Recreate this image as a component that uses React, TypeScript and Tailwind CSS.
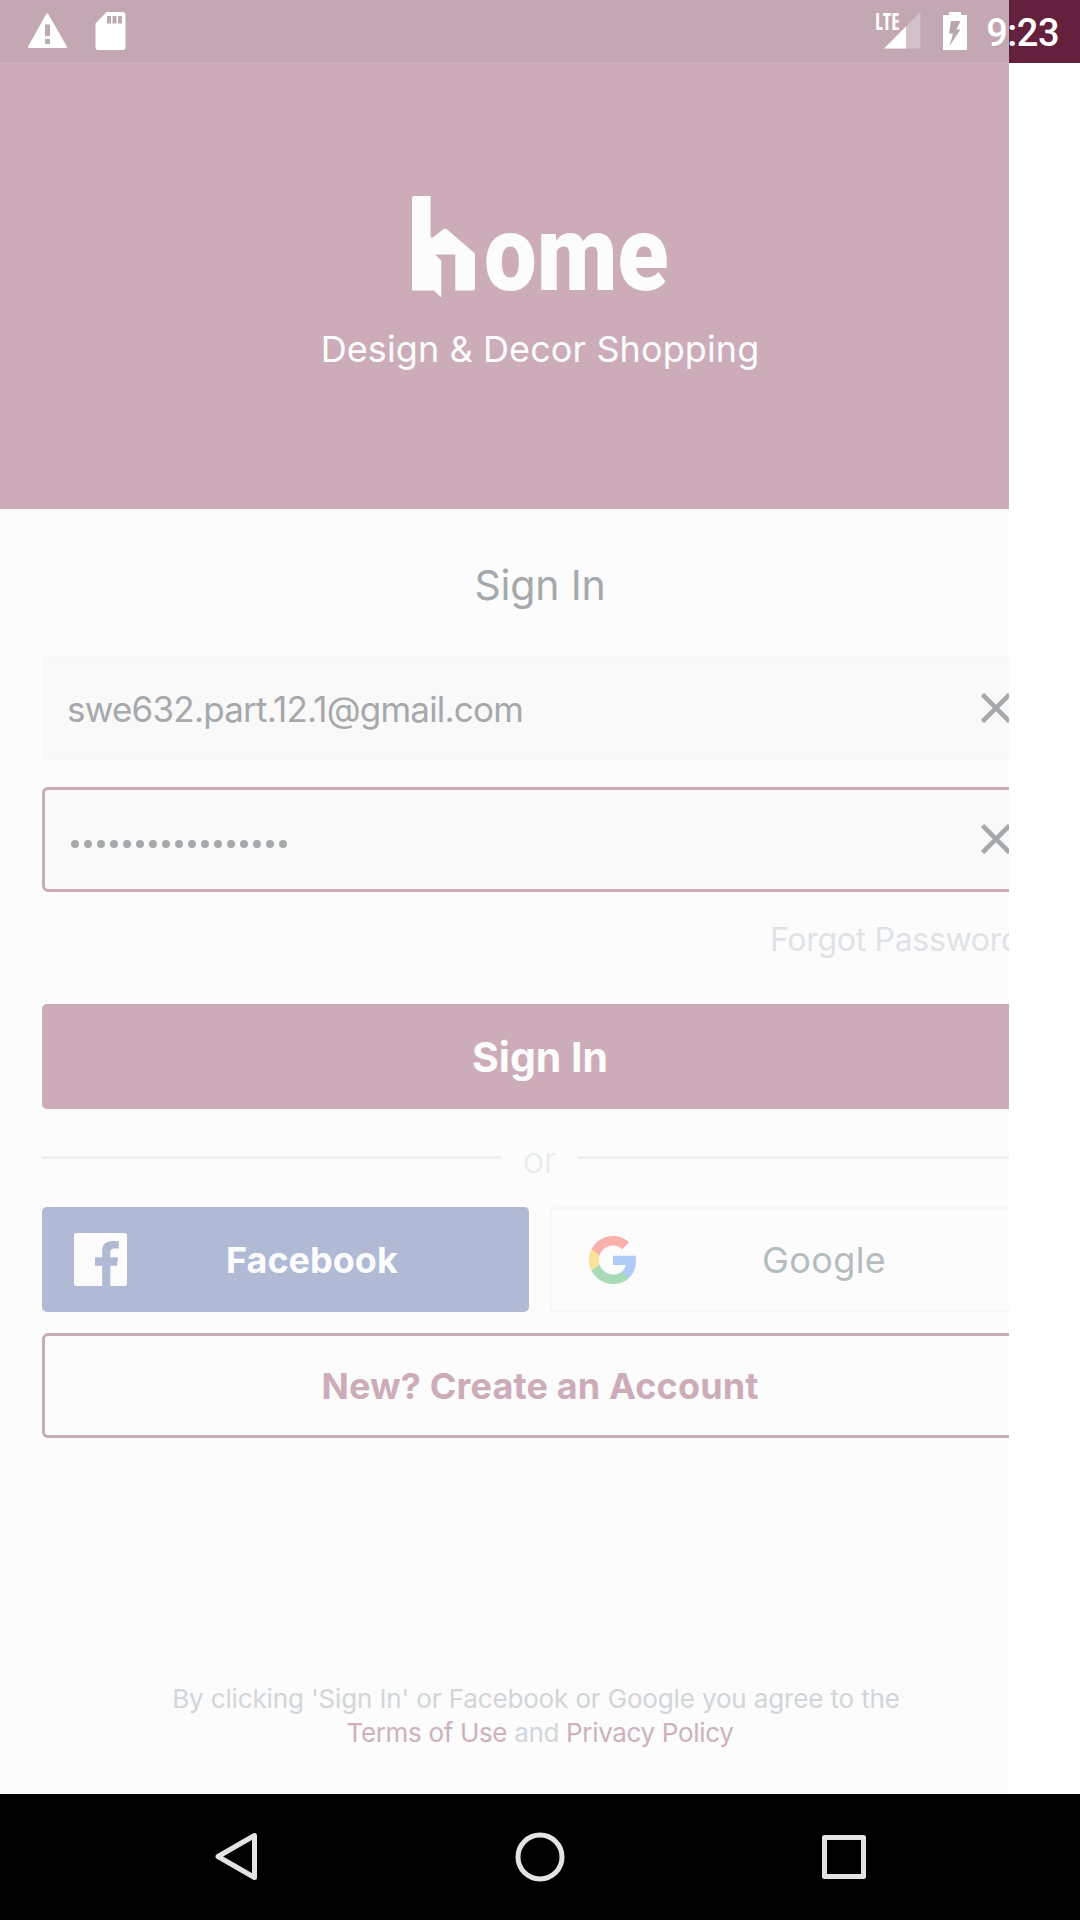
import React from "react";

function WarningIcon() {
  return (
    <svg className="ml-[27px] h-[36px] w-[41px]" viewBox="0 0 41 36">
      <path d="M20.2 2.200 39 35H2Z" fill="#fff" stroke="#fff" strokeWidth="2" strokeLinejoin="round" />
      <path d="M18 12.500h5v11.500h-5zM18 27h5v5h-5z" fill="#bcaab1" />
    </svg>
  );
}

function SdCardIcon() {
  return (
    <svg className="ml-[27px] h-[38px] w-[31px]" viewBox="0 0 31 38">
      <path d="M11.500 0H27.500a3 3 0 0 1 3 3V35a3 3 0 0 1-3 3H3.500a3 3 0 0 1-3-3V11.500Z" fill="#fff" />
      <path d="M12 4h4v7.500h-4zM17.500 4h4v7.500h-4zM23 4h4v7.500h-4z" fill="#bcaab1" />
    </svg>
  );
}

function SignalIcon() {
  return (
    <svg className="h-[37px] w-[37px]" viewBox="0 0 37 37">
      <path d="M36.500 0V36.500H0Z" fill="#d3c1ca" />
      <path d="M22 14.500V36.500H0Z" fill="#fff" />
    </svg>
  );
}

function BatteryIcon() {
  return (
    <svg className="ml-[22px] h-[38px] w-[24px]" viewBox="0 0 24 38">
      <path d="M6 0H18V3H24V38H0V3H6Z" fill="#fff" />
      <path d="M8 9H17.500L13.500 17.500H17.500L6.500 34L10 21.500H6Z" fill="#b9a5ae" />
    </svg>
  );
}

function StatusBar() {
  return (
    <header className="flex h-[63px] shrink-0 items-start bg-linear-to-r from-[#c3a7b2] from-[1009px] to-[#64203c] to-[1009px] pt-[12px]">
      <WarningIcon />
      <SdCardIcon />
      <div className="ml-auto flex items-start">
        <span className="-mr-[16px] block w-[25px] origin-top-left scale-x-[0.84] font-['Open_Sans'] text-[23px] leading-[19px] font-bold text-white [font-stretch:75%]">
          LTE
        </span>
        <SignalIcon />
        <BatteryIcon />
        <span className="mr-[21px] ml-[19px] font-[Roboto] text-[38px] leading-[43px] font-medium tracking-[-0.5px] text-white">9:23</span>
      </div>
    </header>
  );
}

function Hero() {
  return (
    <section className="flex h-[446px] flex-col items-center bg-[#cdacb9] pt-[133px] text-[#fcfcfd]">
      <div className="flex h-[102px] items-start">
        <svg className="mr-[8px] h-[102px] w-[65px]" viewBox="0 0 65 102" fill="#fcfcfd">
          <path d="M3 0H19.500V40q1 3 3 1L32 33.500q2-1.500 4 0L64 57.500V92q0 2.500-2.500 2.500H44.300V58.500H24.300L30.300 64.500V101.500L23 94.500H1V2.500Q1 0 3 0Z" />
        </svg>
        <span className="-mt-[2px] w-[186px] origin-top-left scale-x-[0.885] font-[Roboto] text-[106px] leading-[120px] font-black">ome</span>
      </div>
      <p className="mt-[27px] text-[36px] leading-[48px] tracking-[0.1px] whitespace-nowrap">Design &amp; Decor Shopping</p>
    </section>
  );
}

function ClearIcon() {
  return (
    <svg className="mb-[1px] h-[30px] w-[30px]" viewBox="0 0 30 30" fill="none" stroke="#a4a8aa" strokeWidth="4.600">
      <path d="M1.500 1.500 28.500 28.500M28.500 1.500 1.500 28.500" />
    </svg>
  );
}

function Field({ active, children }: { active?: boolean; children: React.ReactNode }) {
  return (
    <div
      className={
        active
          ? "flex h-[105px] items-center justify-between rounded-[6px] border-[3px] border-[#c9acb8] bg-[#f9f9f9] pr-[24px] pl-[25px]"
          : "flex h-[104px] items-center justify-between rounded-[4px] border-2 border-[#f7f8f8] bg-[#f9f9f9] pr-[25px] pl-[23px]"
      }
    >
      {children}
      <ClearIcon />
    </div>
  );
}

function FacebookIcon() {
  return (
    <svg className="h-[53px] w-[53px]" viewBox="0 0 53 53">
      <path
        fill="#fcfcfd"
        d="M2.500 0H50.500Q53 0 53 2.500V50.500Q53 53 50.500 53H36.300V32.700H43L44 24.300H36.300V19.500Q36.300 15.500 40.500 15.500H44.800V8.300Q42 8 38.500 8Q28.200 8 28.200 18V24.300H21V32.700H28.200V53H2.500Q0 53 0 50.500V2.500Q0 0 2.500 0Z"
      />
    </svg>
  );
}

function GoogleIcon() {
  return (
    <svg className="h-[48px] w-[47px]" viewBox="1 1 21.560 22">
      <path fill="#b1cbf8" d="M22.560 12.250c0-.78-.07-1.530-.2-2.250H12v4.260h5.920c-.26 1.370-1.040 2.530-2.210 3.310v2.770h3.570c2.080-1.920 3.280-4.740 3.280-8.090z" />
      <path fill="#a9dab7" d="M12 23c2.970 0 5.460-.98 7.280-2.660l-3.570-2.770c-.98.66-2.230 1.060-3.710 1.060-2.860 0-5.290-1.930-6.160-4.530H2.180v2.840C3.990 20.530 7.700 23 12 23z" />
      <path fill="#fbe29b" d="M5.840 14.090c-.22-.66-.35-1.360-.35-2.090s.13-1.430.35-2.090V7.070H2.180C1.430 8.550 1 10.220 1 12s.43 3.450 1.180 4.930l3.660-2.840z" />
      <path fill="#f7b0ac" d="M12 5.380c1.620 0 3.060.56 4.210 1.640l3.150-3.150C17.450 2.090 14.970 1 12 1 7.700 1 3.990 3.470 2.180 7.070l3.660 2.840c.87-2.600 3.300-4.530 6.160-4.530z" />
    </svg>
  );
}

function NavBar() {
  return (
    <nav className="flex h-[126px] shrink-0 items-center bg-black">
      <svg className="ml-[213px] h-[52px] w-[46px]" viewBox="0 0 46 52" fill="none" stroke="#e4e4e4" strokeWidth="5" strokeLinejoin="round">
        <path d="M41.500 4.500V46.500L5 25.500Z" />
      </svg>
      <svg className="ml-[255px] h-[52px] w-[52px]" viewBox="0 0 52 52" fill="none" stroke="#e4e4e4" strokeWidth="5">
        <circle cx="26" cy="26" r="22" />
      </svg>
      <svg className="ml-[255px] h-[46px] w-[46px]" viewBox="0 0 46 46" fill="none" stroke="#e4e4e4" strokeWidth="5" strokeLinejoin="round">
        <rect x="3.500" y="3.500" width="39" height="39" />
      </svg>
    </nav>
  );
}

export default function App() {
  return (
    <div className="flex h-[1920px] w-[1080px] flex-col overflow-hidden bg-white font-[Inter,sans-serif]">
      <StatusBar />
      <div className="h-[1731px] w-[1009px] shrink-0 overflow-hidden bg-[#fcfcfc]">
        <div className="flex h-full w-[1080px] flex-col">
          <Hero />
          <main className="flex flex-1 flex-col px-[42px]">
            <h1 className="mt-[50px] text-center text-[41px] leading-[52px] font-normal tracking-[-0.2px] text-[#a5a9ab]">Sign In</h1>
            <div className="mt-[45px] flex flex-col gap-[27px]">
              <Field>
                <span className="pt-px text-[35px] leading-[44px] tracking-[-0.78px] text-[#a5a9ab]">swe632.part.12.1@gmail.com</span>
              </Field>
              <Field active>
                <span className="flex gap-[5px] pt-[8px] pl-px">
                  {Array.from({ length: 17 }, (_, i) => (
                    <i key={i} className="size-[8px] rounded-full bg-[#a5a9ab]" />
                  ))}
                </span>
              </Field>
            </div>
            <a className="mt-[28px] ml-[728px] text-[32px] leading-[40px] tracking-[-0.3px] whitespace-nowrap text-[#dfe3e7]">Forgot Password?</a>
            <button className="mt-[44px] h-[105px] shrink-0 rounded-[5px] bg-[#cdacb9] pt-[2px] text-[41px] font-bold text-[#fcfcfd]">Sign In</button>
            <div className="mt-[25px] flex h-[46px] shrink-0 items-center justify-between">
              <i className="h-[3px] w-[459px] bg-[#ecf0f1]" />
              <span className="pt-[6px] text-[36px] leading-[40px] font-light tracking-[-0.5px] text-[#e7ecee]">or</span>
              <i className="h-[3px] w-[460px] bg-[#ecf0f1]" />
            </div>
            <div className="mt-[27px] flex h-[105px] shrink-0 gap-[21px]">
              <button className="flex w-[487px] items-center rounded-[5px] bg-[#b0bad5] pl-[32px]">
                <FacebookIcon />
                <span className="ml-[99px] text-[36px] leading-[44px] font-bold text-[#fcfcfd]">Facebook</span>
              </button>
              <button className="flex w-[488px] items-center rounded-[5px] border-2 border-[#f6f8f8] pl-[37px]">
                <GoogleIcon />
                <span className="ml-[126px] pt-px text-[36px] leading-[44px] tracking-[0.4px] text-[#b3bcbe]">Google</span>
              </button>
            </div>
            <button className="mt-[21px] h-[105px] shrink-0 rounded-[6px] border-[3px] border-[#c5adb6] text-[36px] font-bold tracking-[0.15px] text-[#cdacb9]">
              New? Create an Account
            </button>
            <p className="mt-auto mb-[44px] text-center text-[26px] leading-[34px] whitespace-nowrap text-[#d0d6d9]">
              <span className="mr-[8px] tracking-[-0.14px]">By clicking 'Sign In' or Facebook or Google you agree to the</span>
              <br />
              <span className="tracking-[-0.33px]">
                <a className="text-[#cdb1bc]">Terms of Use</a> and <a className="text-[#cdb1bc]">Privacy Policy</a>
              </span>
            </p>
          </main>
        </div>
      </div>
      <NavBar />
    </div>
  );
}
